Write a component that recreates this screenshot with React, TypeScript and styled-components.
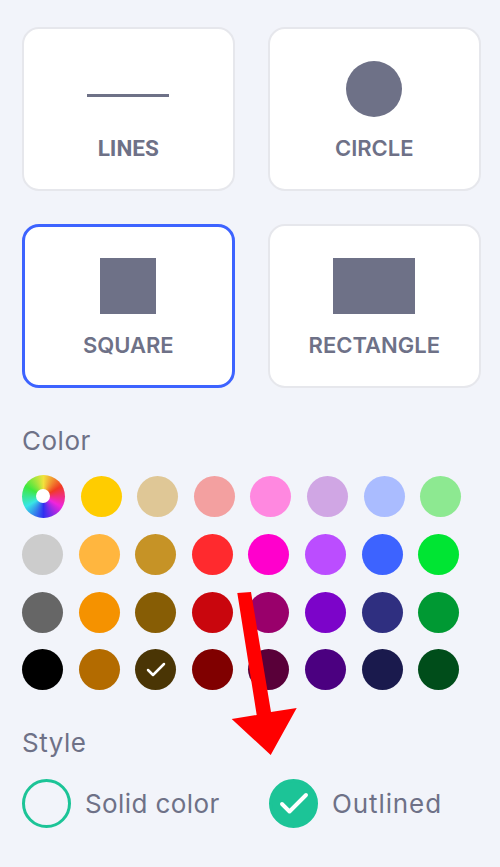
import styled, { createGlobalStyle } from "styled-components";
import { Check } from "lucide-react";

const GlobalStyle = createGlobalStyle`
  html, body {
    margin: 0;
    padding: 0;
    background: #f2f4fa;
  }
  body {
    font-family: "Inter", "Open Sans", sans-serif;
    color: #6e7187;
  }
`;

const Page = styled.div`
  position: relative;
  width: 500px;
  height: 867px;
  overflow: hidden;
  padding: 27px 20px 0 22px;
  box-sizing: border-box;
`;

const ShapeGrid = styled.div`
  display: grid;
  grid-template-columns: 212.5px 212.5px;
  grid-auto-rows: 163.5px;
  column-gap: 33.5px;
  row-gap: 33.5px;
`;

const ShapeCard = styled.div<{ $active?: boolean }>`
  box-sizing: border-box;
  background: #fff;
  border-radius: 17px;
  border: ${(p) => (p.$active ? "3.5px solid #3d63ff" : "2px solid #e6e7ec")};
  display: flex;
  flex-direction: column;
  align-items: center;
  padding-top: ${(p) => (p.$active ? "30.5px" : "32px")};
`;

const ShapeArea = styled.div`
  height: 56px;
  display: flex;
  align-items: center;
  justify-content: center;
`;

const ShapeFill = styled.div<{ $w: number; $h: number; $round?: boolean; $drop?: number }>`
  width: ${(p) => p.$w}px;
  height: ${(p) => p.$h}px;
  margin-top: ${(p) => p.$drop ?? 0}px;
  background: #6e7187;
  border-radius: ${(p) => (p.$round ? "50%" : "0")};
`;

const ShapeLabel = styled.div<{ $narrow?: boolean }>`
  margin-top: 16px;
  font-family: ${(p) => (p.$narrow ? '"Roboto", sans-serif' : "inherit")};
  font-size: ${(p) => (p.$narrow ? "22.5px" : "22px")};
  line-height: 30px;
  font-weight: ${(p) => (p.$narrow ? 700 : 600)};
`;

const SectionTitle = styled.div<{ $top: number }>`
  margin-top: ${(p) => p.$top}px;
  font-size: 26px;
  line-height: 32px;
  font-weight: 400;
  letter-spacing: 0.5px;
`;

const Swatches = styled.div`
  margin-top: 18px;
  display: flex;
  flex-direction: column;
  gap: 16.5px;
`;

const SwatchRow = styled.div`
  display: flex;
  align-items: center;
  gap: 15.6px;
`;

const Swatch = styled.div<{ $color: string }>`
  width: 41px;
  height: 41px;
  border-radius: 50%;
  background: ${(p) => p.$color};
  color: #fff;
  display: flex;
  align-items: center;
  justify-content: center;
`;

const Wheel = styled.div`
  width: 42.5px;
  height: 43px;
  margin-right: 0.5px;
  border-radius: 50%;
  background: conic-gradient(#f2e23c, #f03a22 60deg, #f024dc 120deg, #3030f0 180deg, #38e6e6 240deg, #3fe83f 300deg, #f2e23c);
  display: flex;
  align-items: center;
  justify-content: center;

  &::after {
    content: "";
    width: 14px;
    height: 14px;
    border-radius: 50%;
    background: #fff;
  }
`;

const StyleRow = styled.div`
  margin-top: 19px;
  display: flex;
  align-items: center;
`;

const StyleOption = styled.div<{ $width: number; $spacing: number }>`
  width: ${(p) => p.$width}px;
  display: flex;
  align-items: center;
  gap: 14px;
  font-size: 26px;
  line-height: 51px;
  letter-spacing: ${(p) => p.$spacing}px;
`;

const Radio = styled.div<{ $checked?: boolean }>`
  box-sizing: border-box;
  width: 49px;
  height: 49px;
  border-radius: 50%;
  border: 3px solid #1cc497;
  background: ${(p) => (p.$checked ? "#1cc497" : "transparent")};
  color: #fff;
  display: flex;
  align-items: center;
  justify-content: center;
`;

const ArrowOverlay = styled.svg`
  position: absolute;
  left: 0;
  top: 0;
  pointer-events: none;
`;

const rows = [
  ["#ffcc00", "#dfc796", "#f3a0a0", "#ff88e0", "#d0a6e4", "#aabcff", "#8de991"],
  ["#cccccc", "#ffb63f", "#c69326", "#ff2a2e", "#ff00cc", "#bb4dff", "#3d63ff", "#00e533"],
  ["#666666", "#f59200", "#875d05", "#c9060d", "#99006b", "#7c04c9", "#2f2f80", "#009933"],
  ["#000000", "#b36b00", "#4a3505", "#800000", "#590039", "#4b0080", "#1a1a4d", "#004d1a"],
];

export default function App() {
  return (
    <>
      <GlobalStyle />
      <Page>
        <ShapeGrid>
          <ShapeCard>
            <ShapeArea>
              <ShapeFill $w={82} $h={3.5} $drop={13} />
            </ShapeArea>
            <ShapeLabel $narrow>LINES</ShapeLabel>
          </ShapeCard>
          <ShapeCard>
            <ShapeArea>
              <ShapeFill $w={56} $h={56} $round />
            </ShapeArea>
            <ShapeLabel>CIRCLE</ShapeLabel>
          </ShapeCard>
          <ShapeCard $active>
            <ShapeArea>
              <ShapeFill $w={56} $h={56} />
            </ShapeArea>
            <ShapeLabel>SQUARE</ShapeLabel>
          </ShapeCard>
          <ShapeCard>
            <ShapeArea>
              <ShapeFill $w={82} $h={56} />
            </ShapeArea>
            <ShapeLabel>RECTANGLE</ShapeLabel>
          </ShapeCard>
        </ShapeGrid>

        <SectionTitle $top={37}>Color</SectionTitle>
        <Swatches>
          {rows.map((row, i) => (
            <SwatchRow key={i}>
              {i === 0 && <Wheel />}
              {row.map((color, j) => (
                <Swatch key={color} $color={color}>
                  {i === 3 && j === 2 && <Check size={24} strokeWidth={2.5} />}
                </Swatch>
              ))}
            </SwatchRow>
          ))}
        </Swatches>

        <SectionTitle $top={37}>Style</SectionTitle>
        <StyleRow>
          <StyleOption $width={247} $spacing={0.4}>
            <Radio />
            Solid color
          </StyleOption>
          <StyleOption $width={200} $spacing={0.9}>
            <Radio $checked>
              <Check size={36} strokeWidth={2.6} />
            </Radio>
            Outlined
          </StyleOption>
        </StyleRow>

        <ArrowOverlay width="500" height="867" viewBox="0 0 500 867">
          <polygon
            points="237.3,593 251,592 271,712 296.7,708 270.7,755 231.7,719 256.7,715"
            fill="#ff0000"
          />
        </ArrowOverlay>
      </Page>
    </>
  );
}
